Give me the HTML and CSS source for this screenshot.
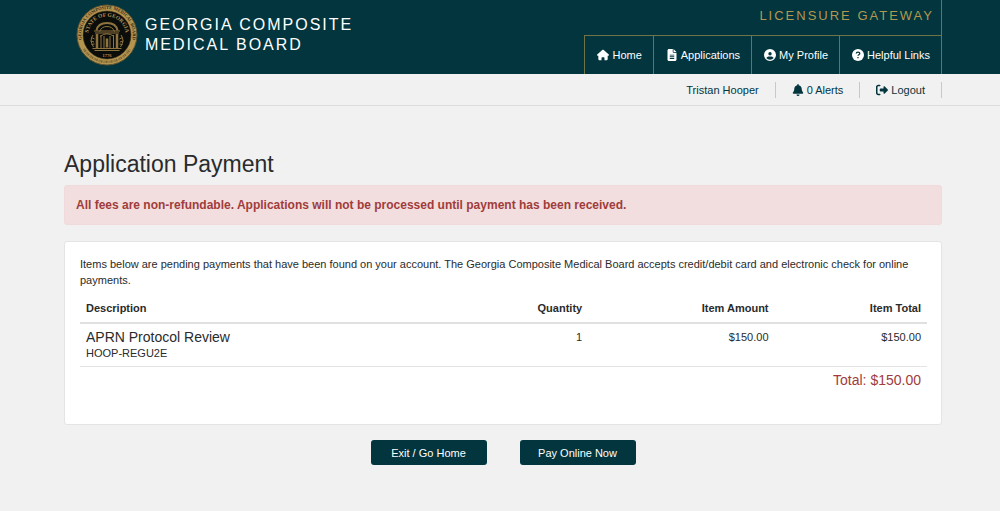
FILE: index.html
```html
<!DOCTYPE html>
<html lang="en">
<head>
<meta charset="utf-8">
<meta name="viewport" content="width=device-width, initial-scale=1">
<title>Application Payment</title>
<link rel="stylesheet" href="styles.css">
</head>
<body>
<header class="masthead">
  <div class="container masthead-inner">
    <div class="brand">
      <svg class="seal" viewBox="0 0 124 124" aria-hidden="true">
        <defs>
          <path id="ring-top" d="M13.500 79A51.500 51.500 0 1 1 110.500 79"/>
          <path id="ring-inner" d="M27 76A37.500 37.500 0 1 1 97 76"/>
        </defs>
        <circle cx="62" cy="62" r="60" fill="#b59450" stroke="#5c5230" stroke-width="2"/>
        <circle cx="62" cy="62" r="48" fill="#0b0d0b" stroke="#3f361c" stroke-width="1"/>
        <text class="seal-outer"><textPath href="#ring-top" startOffset="50%" text-anchor="middle">GEORGIA COMPOSITE MEDICAL BOARD</textPath></text>
        <path d="M16 90A54 54 0 0 0 108 90" fill="none" stroke="#7b6534" stroke-width="5" stroke-dasharray="2 1 3 2 1 1"/>
        <text class="seal-inner"><textPath href="#ring-inner" startOffset="50%" text-anchor="middle">STATE OF GEORGIA</textPath></text>
        <g fill="none" stroke="#8f733f">
          <path d="M41 53C43 42 51 38 62 38S81 42 83 53" stroke-width="4"/>
          <path d="M47 55C50 48 55 45 62 45S74 48 77 55" stroke-width="2"/>
          <path d="M36 54H88M38 58H86" stroke-width="2"/>
          <path d="M42 60V88M62 69V87M82 60V88" stroke-width="5"/>
          <path d="M50 62V88M56 64V88M68 64V88M75 62V88" stroke-width="2"/>
          <path d="M48 65Q62 54 76 65M33 89H91M37 93H87" stroke-width="2"/>
          <path d="M34 62Q26 72 35 86M90 62Q98 72 89 86M31 67l6 3M29 74l7 2M31 81l6-1M93 67l-6 3M95 74l-7 2M93 81l-6-1" stroke-width="2"/>
        </g>
        <text class="seal-year" x="62" y="105" text-anchor="middle">1776</text>
      </svg>
      <div class="brand-name">GEORGIA COMPOSITE<br>MEDICAL BOARD</div>
    </div>
    <div class="gateway">
      <div class="gateway-name">LICENSURE GATEWAY</div>
      <nav class="main-nav" aria-label="Main">
        <a href="#"><svg class="icon" viewBox="0 0 576 512" aria-hidden="true"><path d="M576 256c0 18-15 32-32 32h-32l1 160c0 35-28 64-64 64h-89V400c0-18-14-32-32-32h-80c-18 0-32 14-32 32v112h-88c-36 0-64-29-64-64V288H32c-18 0-32-14-32-32 0-9 3-17 10-24L266 8c13-11 31-11 44 0l255 224c8 7 12 15 11 24z"/></svg>Home</a>
        <a href="#"><svg class="icon" viewBox="0 0 384 512" aria-hidden="true"><path fill-rule="evenodd" d="M64 0C29 0 0 29 0 64v384c0 35 29 64 64 64h256c35 0 64-29 64-64V160H256c-18 0-32-14-32-32V0zM256 0v128h128zM96 240h192v40H96zm0 72h192v40H96zm0 72h192v40H96z"/></svg>Applications</a>
        <a href="#"><svg class="icon" viewBox="0 0 512 512" aria-hidden="true"><path fill-rule="evenodd" d="M256 0a256 256 0 1 0 0 512 256 256 0 0 0 0-512zm0 128a72 72 0 1 1 0 144 72 72 0 0 1 0-144zM97 387c23-39 67-67 111-67h96c44 0 88 28 111 67a206 206 0 0 1-318 0z"/></svg>My Profile</a>
        <a href="#"><svg class="icon" viewBox="0 0 512 512" aria-hidden="true"><circle cx="256" cy="256" r="256"/><path class="icon-cut" d="M180 194c0-40 31-62 76-62s77 24 77 62c0 52-77 46-77 95M256 345v50"/></svg>Helpful Links</a>
      </nav>
    </div>
  </div>
</header>
<div class="account-bar">
  <nav class="container account-nav" aria-label="Account">
    <a href="#">Tristan Hooper</a>
    <a href="#"><svg class="icon" viewBox="0 0 448 512" aria-hidden="true"><path d="M224 0c-18 0-32 14-32 32v19C119 66 64 130 64 208v19c0 47-17 92-48 127l-8 9c-8 9-10 22-5 34s16 19 29 19h384c13 0 24-7 29-19s3-25-5-34l-8-9c-31-35-48-80-48-127v-19c0-78-55-142-128-157V32c0-18-14-32-32-32zM160 448a64 64 0 0 0 128 0z"/></svg>0 Alerts</a>
    <a href="#"><svg class="icon" viewBox="0 0 512 512" aria-hidden="true"><path d="M502 278c13-12 13-32 0-45L374 105c-9-10-22-12-34-7s-20 17-20 30v64H192c-18 0-32 14-32 32v64c0 18 14 32 32 32h128v64c0 13 8 25 20 30s25 2 34-7zM160 96c18 0 32-14 32-32s-14-32-32-32H96C43 32 0 75 0 128v256c0 53 43 96 96 96h64c18 0 32-14 32-32s-14-32-32-32H96c-18 0-32-14-32-32V128c0-18 14-32 32-32z"/></svg>Logout</a>
  </nav>
</div>
<main class="container content">
  <h1>Application Payment</h1>
  <div class="notice" role="alert">All fees are non-refundable. Applications will not be processed until payment has been received.</div>
  <section class="card">
    <p>Items below are pending payments that have been found on your account. The Georgia Composite Medical Board accepts credit/debit card and electronic check for online payments.</p>
    <table>
      <colgroup><col class="col-description"><col class="col-quantity"><col class="col-amount"><col class="col-total"></colgroup>
      <thead>
        <tr><th scope="col">Description</th><th scope="col">Quantity</th><th scope="col">Item Amount</th><th scope="col">Item Total</th></tr>
      </thead>
      <tbody>
        <tr><td><div class="item-name">APRN Protocol Review</div><div>HOOP-REGU2E</div></td><td>1</td><td>$150.00</td><td>$150.00</td></tr>
      </tbody>
      <tfoot>
        <tr><td colspan="4">Total: $150.00</td></tr>
      </tfoot>
    </table>
  </section>
  <div class="actions">
    <button type="button">Exit / Go Home</button>
    <button type="button">Pay Online Now</button>
  </div>
</main>
</body>
</html>
```
FILE: styles.css
```css
* { box-sizing: border-box; }

body {
  margin: 0;
  background: #f1f1f1;
  color: #292b2c;
  font: 11px/16px "Liberation Sans", Arial, sans-serif;
}

a { color: inherit; text-decoration: none; }

.container { padding: 0 58px 0 64px; }

.masthead { background: #02353e; color: #fff; }

.masthead-inner {
  display: flex;
  justify-content: space-between;
}

.brand {
  display: flex;
  align-items: center;
  gap: 7px;
  padding: 0 0 4px 12px;
}

.seal { width: 62px; height: 62px; }

.seal text { font-family: "Liberation Serif", serif; font-weight: bold; }
.seal-outer { font-size: 9px; fill: #2f2a16; }
.seal-inner { font-size: 11px; fill: #b3935a; }
.seal .seal-year { font-size: 9px; fill: #b3935a; }

.brand-name {
  font-size: 16px;
  line-height: 20px;
  letter-spacing: 2px;
}

.gateway {
  border-right: 1px solid #6f7446;
}

.gateway-name {
  padding: 6px 7px 9px 0;
  color: #b3984f;
  font-size: 13px;
  line-height: 20px;
  letter-spacing: 2px;
  text-align: right;
}

.main-nav {
  display: flex;
  border-top: 1px solid #6f7446;
}

.main-nav a {
  display: flex;
  align-items: center;
  gap: 3px;
  height: 38px;
  padding: 0 11px 0 12px;
  border-left: 1px solid #6f7446;
}

.main-nav a:first-child { margin-left: auto; }

.icon { width: 12px; height: 12px; fill: currentColor; }
.icon-cut { fill: none; stroke: #02353e; stroke-width: 54; }

.account-bar {
  border-bottom: 1px solid #dcdcdc;
  color: #02353e;
}

.account-nav {
  display: flex;
  justify-content: flex-end;
  padding-top: 8px;
  padding-bottom: 7px;
}

.account-nav a {
  display: flex;
  align-items: center;
  gap: 3px;
  padding: 0 16px;
  border-right: 1px solid #c8c8c8;
}

.content { padding-top: 43px; }

h1 {
  margin: 0 0 6px;
  font-size: 23px;
  line-height: 30px;
  font-weight: normal;
}

.notice {
  padding: 11px;
  border: 1px solid #f1dadb;
  border-radius: 3px;
  background: #f2dede;
  color: #a03c3b;
  font-size: 12px;
  font-weight: bold;
}

.card {
  margin-top: 16px;
  padding: 14px 14px 30px 15px;
  border: 1px solid #e4e4e4;
  border-radius: 3px;
  background: #fff;
}

p { margin: 0 0 6px; }

table { width: 100%; border-collapse: collapse; table-layout: fixed; }
.col-description { width: 42%; }
.col-quantity { width: 18%; }
.col-amount { width: 22%; }
.col-total { width: 18%; }

th, td { padding: 6px; text-align: right; vertical-align: top; }
th:first-child, td:first-child { text-align: left; }
tbody td { padding-top: 5px; padding-bottom: 5px; }
thead tr { border-bottom: 2px solid #e0e0e0; }
tbody tr { border-bottom: 1px solid #e4e4e4; }
.item-name { font-size: 14px; }

tfoot td:first-child {
  padding-top: 5px;
  color: #a03c3b;
  font-size: 14px;
  text-align: right;
}

.actions {
  display: flex;
  justify-content: center;
  gap: 33px;
  padding: 15px 0;
}

button {
  width: 116px;
  height: 25px;
  padding: 0;
  border: 0;
  border-radius: 3px;
  background: #02353e;
  color: #fff;
  font: inherit;
}
```
